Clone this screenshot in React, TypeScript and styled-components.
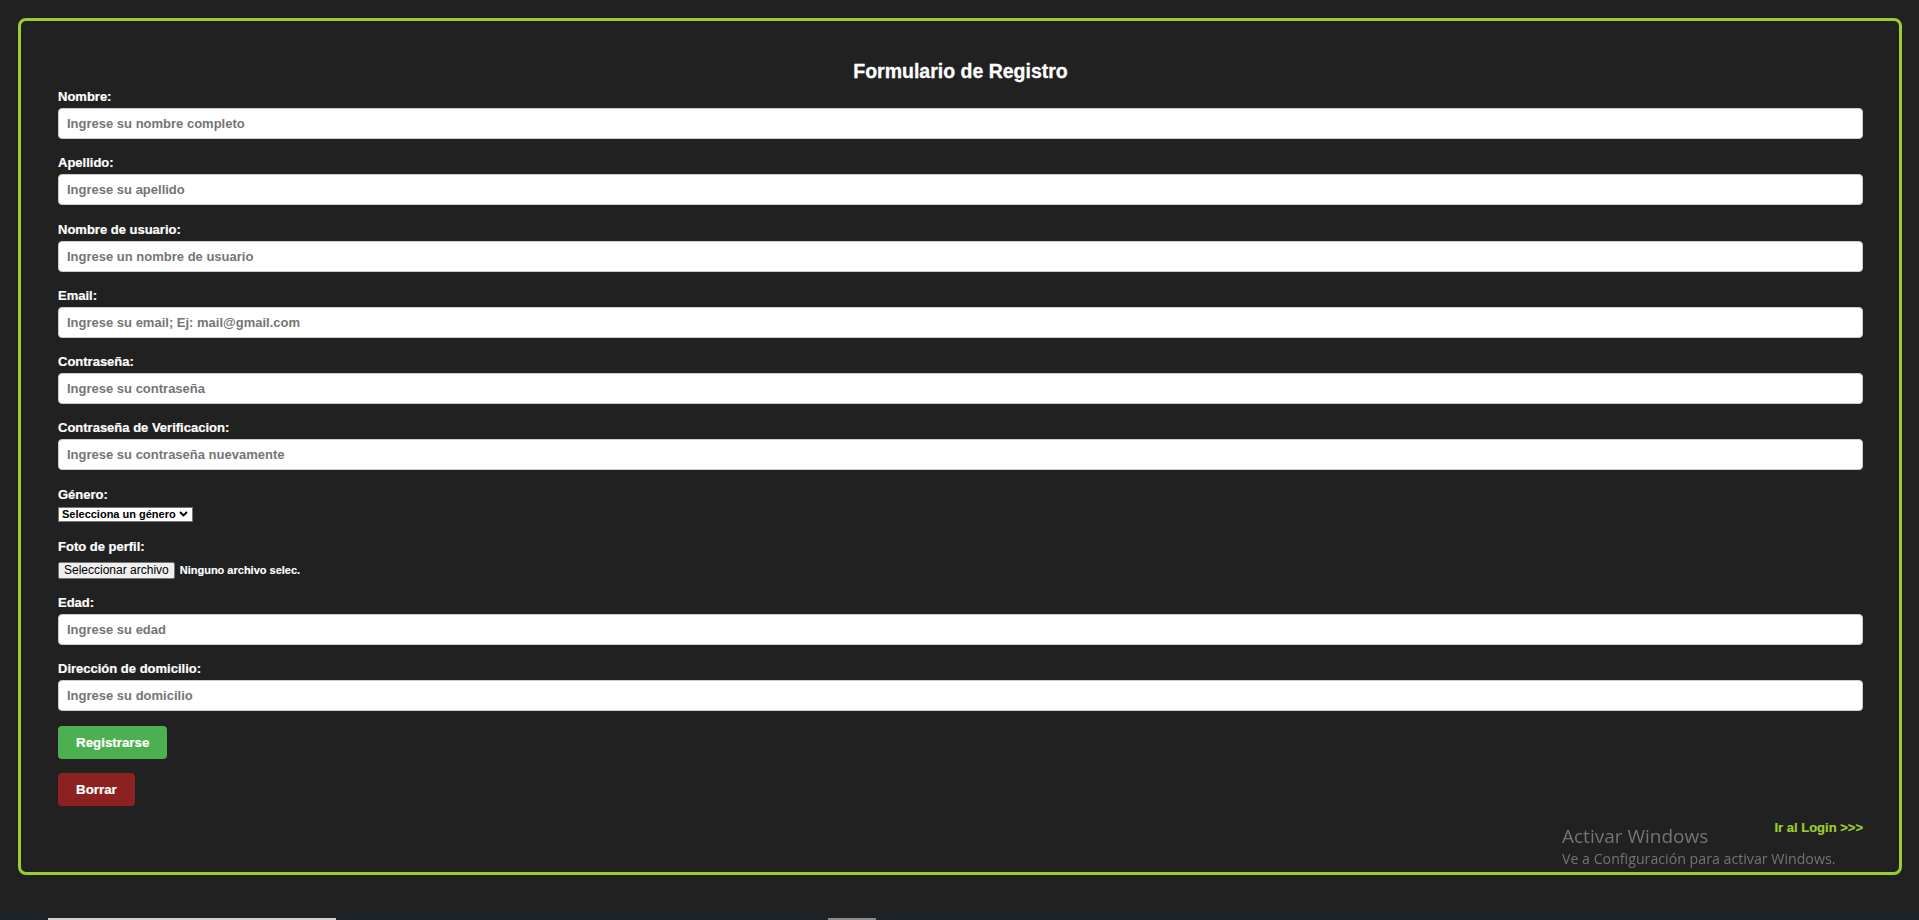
import React from "react";
import styled, { createGlobalStyle } from "styled-components";

const GlobalStyle = createGlobalStyle`
  html, body {
    margin: 0;
    padding: 0;
    background: #212121;
  }
  body {
    font-family: "Liberation Sans", Arial, sans-serif;
    font-size: 13px;
    color: #ffffff;
  }
  #root {
    min-height: 100vh;
  }
`;

const Page = styled.main`
  padding: 18px 17px 0 18px;
`;

const Card = styled.form`
  border: 3px solid #9acd32;
  border-radius: 8px;
  padding: 37px 36px 37px 37px;
  display: flex;
  flex-direction: column;
`;

const Title = styled.h2`
  margin: 2px 0 6.6px;
  text-align: center;
  font-size: 19.5px;
  line-height: 22.4px;
  font-weight: bold;
  color: #ffffff;
  -webkit-text-stroke: 0.3px currentColor;
`;

const FieldLabel = styled.label`
  display: block;
  font-size: 13px;
  line-height: 15px;
  font-weight: bold;
  color: #ffffff;
  margin-bottom: 4px;
  -webkit-text-stroke: 0.2px currentColor;
`;

const TextInput = styled.input`
  display: block;
  box-sizing: border-box;
  width: 100%;
  height: 31px;
  margin: 0 0 16.3px;
  padding: 0 8px;
  border: 1px solid #cccccc;
  border-radius: 4px;
  background: #ffffff;
  font-family: "Liberation Sans", Arial, sans-serif;
  font-size: 13px;
  font-weight: bold;
  color: #333333;
  outline: none;
  &::placeholder {
    color: #757575;
  }
`;

const SelectBox = styled.div`
  display: inline-flex;
  align-self: flex-start;
  align-items: center;
  gap: 3px;
  box-sizing: border-box;
  height: 15px;
  margin: 1px 0 17px;
  padding: 0 4px 0 3px;
  border: 1px solid #767676;
  background: #ffffff;
  color: #000000;
`;

const Select = styled.select`
  appearance: none;
  -webkit-appearance: none;
  border: none;
  outline: none;
  padding: 0;
  margin: 0;
  background: transparent;
  font-family: "Liberation Sans", Arial, sans-serif;
  font-size: 11px;
  line-height: 13px;
  font-weight: bold;
  color: #000000;
`;

const Chevron = styled.svg`
  width: 9px;
  height: 6px;
  flex: none;
  pointer-events: none;
`;

const FileRow = styled.label`
  display: flex;
  align-items: center;
  gap: 5px;
  padding-top: 4px;
  margin-bottom: 16px;
  cursor: pointer;
`;

const HiddenFile = styled.input`
  display: none;
`;

const FileButton = styled.span`
  box-sizing: border-box;
  height: 17px;
  padding: 1px 5px;
  border: 1px solid #767676;
  border-radius: 2px;
  background: #efefef;
  color: #000000;
  font-family: "Liberation Sans", Arial, sans-serif;
  font-size: 12px;
  line-height: 13px;
  font-weight: normal;
`;

const FileText = styled.span`
  font-size: 11px;
  line-height: 13px;
  font-weight: bold;
  color: #ffffff;
  -webkit-text-stroke: 0.15px currentColor;
`;

const Actions = styled.div`
  display: flex;
  flex-direction: column;
  align-items: flex-start;
  gap: 13.5px;
  margin-top: -1.3px;
`;

const ActionButton = styled.button<{ $variant: "primary" | "danger" }>`
  border: none;
  border-radius: 4px;
  padding: 9px 18px;
  background: ${(p) => (p.$variant === "primary" ? "#4caf50" : "#8b2121")};
  color: #ffffff;
  font-family: "Liberation Sans", Arial, sans-serif;
  font-size: 13.33px;
  line-height: 15.4px;
  font-weight: bold;
  cursor: pointer;
  -webkit-text-stroke: 0.2px currentColor;
`;

const LoginRow = styled.div`
  display: flex;
  justify-content: flex-end;
  margin-top: 14px;
`;

const LoginLink = styled.a`
  color: #9acd32;
  font-size: 13px;
  line-height: 15px;
  font-weight: bold;
  text-decoration: none;
  -webkit-text-stroke: 0.2px currentColor;
`;

const Watermark = styled.div`
  position: fixed;
  left: 1562px;
  top: 824px;
  color: #747474;
  font-family: "Open Sans", "Noto Sans", sans-serif;
  pointer-events: none;
`;

const WatermarkTitle = styled.div`
  font-size: 19px;
  line-height: 25px;
`;

const WatermarkText = styled.div`
  font-size: 14.2px;
  line-height: 19px;
`;

const Taskbar = styled.div`
  position: fixed;
  left: 0;
  right: 0;
  bottom: 0;
  height: 5px;
  background: #1c2329;
  display: flex;
  align-items: flex-end;
  padding-left: 48px;
`;

const TaskbarItem = styled.div<{ $w: number; $ml: number; $c: string }>`
  width: ${(p) => p.$w}px;
  margin-left: ${(p) => p.$ml}px;
  height: 2px;
  background: ${(p) => p.$c};
`;

const fields = [
  { id: "nombre", label: "Nombre:", placeholder: "Ingrese su nombre completo", type: "text" },
  { id: "apellido", label: "Apellido:", placeholder: "Ingrese su apellido", type: "text" },
  { id: "usuario", label: "Nombre de usuario:", placeholder: "Ingrese un nombre de usuario", type: "text" },
  { id: "email", label: "Email:", placeholder: "Ingrese su email; Ej: mail@gmail.com", type: "email" },
  { id: "password", label: "Contraseña:", placeholder: "Ingrese su contraseña", type: "password" },
  {
    id: "password2",
    label: "Contraseña de Verificacion:",
    placeholder: "Ingrese su contraseña nuevamente",
    type: "password",
  },
];

export default function App() {
  return (
    <>
      <GlobalStyle />
      <Page>
        <Card onSubmit={(e) => e.preventDefault()}>
          <Title>Formulario de Registro</Title>
          {fields.map((f) => (
            <React.Fragment key={f.id}>
              <FieldLabel htmlFor={f.id}>{f.label}</FieldLabel>
              <TextInput id={f.id} type={f.type} placeholder={f.placeholder} />
            </React.Fragment>
          ))}

          <FieldLabel htmlFor="genero">Género:</FieldLabel>
          <SelectBox>
            <Select id="genero" defaultValue="">
              <option value="">Selecciona un género</option>
              <option value="m">Masculino</option>
              <option value="f">Femenino</option>
              <option value="o">Otro</option>
            </Select>
            <Chevron viewBox="0 0 9 6">
              <path d="M1 1 L4.5 4.5 L8 1" fill="none" stroke="#000" strokeWidth="1.8" />
            </Chevron>
          </SelectBox>

          <FieldLabel as="div">Foto de perfil:</FieldLabel>
          <FileRow>
            <HiddenFile type="file" accept="image/*" />
            <FileButton>Seleccionar archivo</FileButton>
            <FileText>Ninguno archivo selec.</FileText>
          </FileRow>

          <FieldLabel htmlFor="edad">Edad:</FieldLabel>
          <TextInput id="edad" type="number" placeholder="Ingrese su edad" />

          <FieldLabel htmlFor="domicilio">Dirección de domicilio:</FieldLabel>
          <TextInput id="domicilio" type="text" placeholder="Ingrese su domicilio" />

          <Actions>
            <ActionButton type="submit" $variant="primary">
              Registrarse
            </ActionButton>
            <ActionButton type="reset" $variant="danger">
              Borrar
            </ActionButton>
          </Actions>

          <LoginRow>
            <LoginLink href="#">Ir al Login &gt;&gt;&gt;</LoginLink>
          </LoginRow>
        </Card>
      </Page>
      <Watermark>
        <WatermarkTitle>Activar Windows</WatermarkTitle>
        <WatermarkText>Ve a Configuración para activar Windows.</WatermarkText>
      </Watermark>
      <Taskbar>
        <TaskbarItem $w={288} $ml={0} $c="#cfcfcf" />
        <TaskbarItem $w={48} $ml={492} $c="#8a8a8a" />
      </Taskbar>
    </>
  );
}
